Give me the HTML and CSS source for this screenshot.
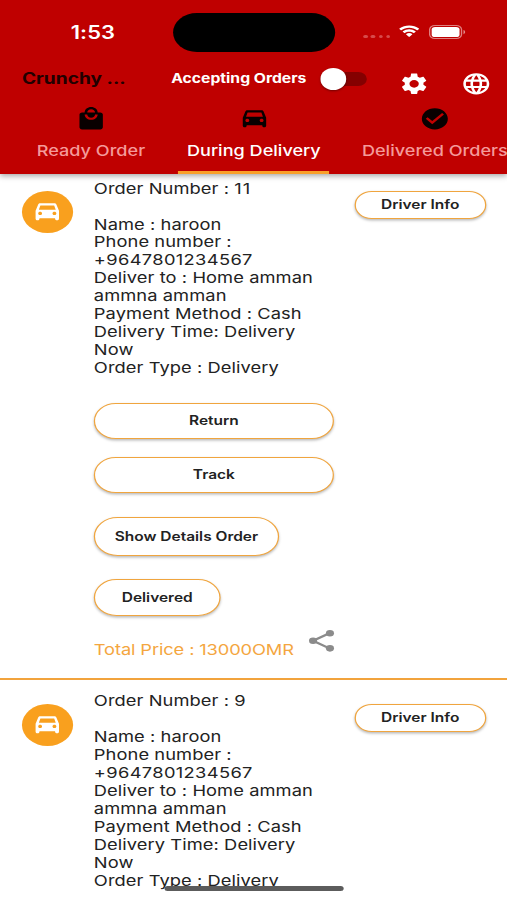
FILE: index.html
```html
<!DOCTYPE html>
<html lang="en">
<head>
<meta charset="utf-8">
<title>Orders</title>
<link rel="stylesheet" href="styles.css">
</head>
<body>
<svg class="defs" aria-hidden="true">
  <symbol id="car" viewBox="0 0 24 24"><path d="M18.920 5.010C18.720 4.420 18.160 4 17.500 4h-11c-.66 0-1.210.42-1.420 1.010L3 11v7.500c0 .83.67 1.500 1.500 1.500S6 19.330 6 18.500V18h12v.5c0 .83.67 1.500 1.500 1.500s1.500-.67 1.500-1.500V11l-2.080-5.990zM6.500 15c-.83 0-1.500-.67-1.500-1.500S5.670 12 6.500 12s1.500.67 1.500 1.500S7.330 15 6.500 15zm11 0c-.83 0-1.500-.67-1.500-1.500s.67-1.500 1.500-1.500 1.500.67 1.500 1.500-.67 1.500-1.500 1.500zM5.500 10l1.200-4h10.600l1.200 4h-13z"/></symbol>
</svg>
<div class="screen">
  <header class="header">
    <div class="status">
      <span class="time">1:53</span>
      <span class="island"></span>
      <span class="signal"><i></i><i></i><i></i><i></i></span>
      <svg class="wifi" viewBox="0 0 17 13" preserveAspectRatio="none"><path d="M8.5 2.6c2.4 0 4.6.9 6.2 2.5.1.1.3.1.4 0l1.2-1.2c.1-.1.1-.3 0-.5C12-.6 5-.6.7 3.400c-.1.2-.1.4 0 .5l1.200 1.200c.1.1.3.1.4 0C3.900 3.500 6.100 2.600 8.500 2.600zm0 3.900c1.300 0 2.500.5 3.500 1.300.1.100.3.100.4 0l1.200-1.200c.1-.1.1-.3 0-.5-2.900-2.700-7.300-2.700-10.200 0-.1.200-.1.400 0 .5l1.200 1.200c.1.100.3.100.4 0 1-.8 2.200-1.300 3.500-1.300zm2.400 2.700c.1-.1.1-.3 0-.5-1.400-1.200-3.400-1.200-4.800 0-.1.100-.1.400 0 .5l2.100 2.200c.2.200.4.200.6 0z"/></svg>
      <svg class="battery" viewBox="0 0 28 14" preserveAspectRatio="none"><rect x=".5" y=".5" width="24" height="13" rx="4" fill="none" stroke="#fff" stroke-opacity=".5"/><rect x="2" y="2" width="21" height="10" rx="2.600"/><path d="M26 5v4.200c1.600-.7 1.600-3.500 0-4.200z" opacity=".55"/></svg>
    </div>
    <div class="appbar">
      <span class="shop"><span class="shop-name">Crunchy ...</span></span>
      <span class="accepting">Accepting Orders</span>
      <span class="switch"><i></i></span>
      <svg class="tool gear" viewBox="0 0 24 24"><path d="M19.140 12.940c.04-.3.06-.61.06-.94 0-.32-.02-.64-.07-.94l2.030-1.580c.18-.14.23-.41.12-.61l-1.920-3.320c-.12-.22-.37-.29-.59-.22l-2.390.96c-.5-.38-1.030-.7-1.620-.94l-.36-2.540c-.04-.24-.24-.41-.48-.41h-3.840c-.24 0-.43.17-.47.41l-.36 2.540c-.59.24-1.130.57-1.620.94l-2.390-.96c-.22-.08-.47 0-.59.22L2.740 8.870c-.12.21-.08.47.12.61l2.030 1.580c-.05.3-.09.63-.09.94s.02.64.07.94l-2.030 1.580c-.18.14-.23.41-.12.61l1.920 3.320c.12.22.37.29.59.22l2.390-.96c.5.38 1.030.7 1.620.94l.36 2.540c.05.24.24.41.48.41h3.840c.24 0 .44-.17.47-.41l.36-2.540c.59-.24 1.130-.56 1.620-.94l2.390.96c.22.08.47 0 .59-.22l1.920-3.320c.12-.22.07-.47-.12-.61l-2.010-1.580zM12 15.600c-1.980 0-3.600-1.620-3.600-3.600s1.620-3.600 3.600-3.600 3.600 1.620 3.600 3.600-1.620 3.600-3.600 3.600z"/></svg>
      <svg class="tool globe" viewBox="0 0 24 24"><path d="M11.990 2C6.470 2 2 6.480 2 12s4.470 10 9.990 10C17.520 22 22 17.520 22 12S17.520 2 11.990 2zm6.930 6h-2.950c-.32-1.250-.78-2.450-1.380-3.560 1.840.63 3.370 1.910 4.330 3.560zM12 4.040c.83 1.200 1.480 2.530 1.910 3.960h-3.820c.43-1.430 1.080-2.760 1.910-3.960zM4.260 14C4.100 13.360 4 12.690 4 12s.1-1.360.26-2h3.380c-.08.66-.14 1.320-.14 2s.06 1.340.14 2H4.260zm.82 2h2.950c.32 1.250.78 2.450 1.380 3.560-1.840-.63-3.370-1.900-4.330-3.560zm2.950-8H5.080c.96-1.660 2.490-2.930 4.330-3.560C8.810 5.550 8.350 6.750 8.030 8zM12 19.960c-.83-1.200-1.480-2.530-1.910-3.960h3.820c-.43 1.430-1.080 2.760-1.910 3.960zM14.340 14H9.660c-.09-.66-.16-1.320-.16-2s.07-1.350.16-2h4.680c.09.65.16 1.320.16 2s-.07 1.340-.16 2zm.25 5.560c.6-1.110 1.060-2.310 1.380-3.560h2.950c-.96 1.650-2.490 2.930-4.330 3.560zM16.360 14c.08-.66.14-1.320.14-2s-.06-1.340-.14-2h3.380c.16.640.26 1.310.26 2s-.1 1.360-.26 2h-3.380z"/></svg>
    </div>
    <nav class="tabs">
      <div class="tab ready">
        <svg viewBox="0 0 24 24"><path d="M19 6h-2c0-2.760-2.240-5-5-5S7 3.240 7 6H5c-1.100 0-1.990.9-1.990 2L3 20c0 1.100.9 2 2 2h14c1.100 0 2-.9 2-2V8c0-1.100-.9-2-2-2zm-7-3c1.660 0 3 1.340 3 3H9c0-1.660 1.340-3 3-3zm0 10c-2.760 0-5-2.240-5-5h2c0 1.660 1.340 3 3 3s3-1.340 3-3h2c0 2.760-2.240 5-5 5z"/></svg>
        <span>Ready Order</span>
      </div>
      <div class="tab during active">
        <svg><use href="#car"/></svg>
        <span>During Delivery</span>
      </div>
      <div class="tab done">
        <svg viewBox="0 0 24 24"><path d="M12 2C6.480 2 2 6.480 2 12s4.480 10 10 10 10-4.480 10-10S17.520 2 12 2zm-2 15l-5-5 1.410-1.410L10 14.170l7.590-7.590L19 8l-9 9z"/></svg>
        <span>Delivered Orders</span>
      </div>
    </nav>
  </header>
  <main class="orders">
    <article class="order">
      <div class="avatar"><svg><use href="#car"/></svg></div>
      <div class="body">
        <p class="details">Order Number : <span class="num">11</span><br><br>Name : haroon<br>Phone number :<br><span class="phone">+9647801234567</span><br>Deliver to : Home amman<br>ammna amman<br>Payment Method : Cash<br>Delivery Time: Delivery<br>Now<br>Order Type : Delivery</p>
        <button class="btn return">Return</button>
        <button class="btn track">Track</button>
        <button class="btn show">Show Details Order</button>
        <button class="btn delivered">Delivered</button>
        <div class="total">
          <span>Total Price : 13000OMR</span>
          <svg viewBox="0 0 24 24"><path d="M5.500 12 18.500 4.700M5.500 12l13 7.300" fill="none" stroke="#8b8b8b" stroke-width="2"/><circle cx="5.500" cy="12" r="3.100"/><circle cx="18.500" cy="4.900" r="3.100"/><circle cx="18.500" cy="19.100" r="3.100"/></svg>
        </div>
      </div>
      <button class="btn driver">Driver Info</button>
    </article>
    <article class="order">
      <div class="avatar"><svg><use href="#car"/></svg></div>
      <div class="body">
        <p class="details">Order Number : <span class="num">9</span><br><br>Name : haroon<br>Phone number :<br><span class="phone">+9647801234567</span><br>Deliver to : Home amman<br>ammna amman<br>Payment Method : Cash<br>Delivery Time: Delivery<br>Now<br>Order Type : Delivery</p>
      </div>
      <button class="btn driver">Driver Info</button>
    </article>
  </main>
  <div class="home-bar"></div>
</div>
</body>
</html>
```
FILE: styles.css
```css
* { box-sizing: border-box; }
html, body { margin: 0; height: 900px; overflow: hidden; background: #fff; }
.defs { display: none; }

/* The layout is drawn 416px wide and stretched to the full window width. */
.screen {
  position: relative;
  width: 416px;
  height: 900px;
  overflow: hidden;
  transform: scaleX(1.21875);
  transform-origin: 0 0;
  font-family: Inter, "Liberation Sans", sans-serif;
  color: #222;
}
svg { display: block; flex: none; fill: currentColor; }

.header {
  position: relative;
  z-index: 1;
  height: 174px;
  background: #bf0000;
  color: #fff;
  box-shadow: 0 2px 5px rgba(0, 0, 0, .35);
  display: flex;
  flex-direction: column;
}
.status { display: flex; height: 64px; padding-left: 58px; }
.time { width: 84px; margin-top: 22px; font-size: 18px; line-height: 22px; font-weight: 600; letter-spacing: .1px; }
.island { width: 132.500px; height: 39px; margin-top: 13px; border-radius: 20px; background: #000; }
.signal { display: flex; gap: 2.800px; margin: 34.500px 0 0 23.500px; width: 29.500px; }
.signal i { width: 3.500px; height: 3.500px; border-radius: 50%; background: #d64a4a; }
.wifi { width: 17.500px; height: 13.500px; margin: 25px 0 0 -.5px; }
.battery { width: 30.500px; height: 14px; margin: 25px 0 0 7.500px; }

.appbar { display: flex; height: 41px; padding-left: 18px; }
.shop { width: 122.500px; margin-top: 5px; font-size: 15.700px; line-height: 20px; font-weight: 700; color: #210000; white-space: nowrap; }
.accepting { width: 122px; margin-top: 6px; font-size: 12.900px; line-height: 18px; font-weight: 700; white-space: nowrap; }
.switch { width: 38px; height: 14px; margin-top: 8px; border-radius: 7px; background: #840000; }
.switch i { display: block; width: 21.500px; height: 21.500px; margin-top: -4px; border-radius: 50%; background: #fff; box-shadow: 0 1px 2px rgba(0, 0, 0, .4); }
.tool { width: 25.600px; height: 25.600px; margin-top: 7px; }
.gear { margin-left: 26.500px; }
.globe { margin-left: 25px; }

.tabs { display: flex; height: 69px; padding-left: 13px; }
.tab {
  flex: none;
  display: flex;
  flex-direction: column;
  align-items: center;
  font-size: 14.850px;
  line-height: 20px;
  font-weight: 500;
  white-space: nowrap;
  color: #f49a9a;
}
.tab svg { width: 25.600px; height: 25.600px; margin-top: .8px; color: #080000; }
.tab span { margin-top: 9.600px; height: 33px; padding: 0 7px; }
.ready { width: 123.300px; }
.during { width: 144px; }
.done { width: 153px; }
.tab.active { color: #fff; }
.tab.active span { border-bottom: 3px solid #f9a02a; }

.orders { margin-top: -7px; }
.order {
  display: flex;
  align-items: flex-start;
  height: 513px;
  padding: 12px 16px 0 18px;
  border-bottom: 2px solid #f2a33c;
}
.order:first-child .details { padding-top: .6px; }
.avatar {
  width: 42px;
  height: 42px;
  margin-top: 12px;
  border-radius: 50%;
  background: #f9a01e;
  color: #fff;
  display: flex;
  align-items: center;
  justify-content: center;
}
.avatar svg { width: 25.600px; height: 25.600px; }
.body { display: flex; flex-direction: column; align-items: flex-start; width: 197px; margin-left: 17px; }
.details { margin: 0 0 26px; font-size: 15px; line-height: 17.950px; letter-spacing: .06px; white-space: nowrap; }
.num { letter-spacing: .8px; }
.phone { letter-spacing: .29px; }
.btn {
  padding: 0;
  border: 1.300px solid #f0a53e;
  border-radius: 20px;
  background: #fff;
  box-shadow: 0 1.500px 2.500px rgba(0, 0, 0, .28);
  font: 600 12.700px/16px Inter, "Liberation Sans", sans-serif;
  color: #222;
  white-space: nowrap;
}
.return, .track { width: 197px; height: 36px; margin-bottom: 18px; }
.show { width: 152px; height: 39px; margin: 6px 0 23px; }
.delivered { width: 104px; height: 37px; }
.driver { width: 108.500px; height: 27.500px; margin: 12px 0 0 16.500px; }
.total { display: flex; font-size: 15px; line-height: 18px; letter-spacing: -.1px; color: #f4a63f; margin-top: 12px; white-space: nowrap; }
.total span { width: 173.500px; margin-top: 13px; }
.total svg { width: 25.600px; height: 25.600px; color: #8b8b8b; }

.home-bar {
  position: absolute;
  z-index: 2;
  left: 134.500px;
  bottom: 9px;
  width: 147.500px;
  height: 5px;
  border-radius: 3px;
  background: #5c5c5c;
}
```
